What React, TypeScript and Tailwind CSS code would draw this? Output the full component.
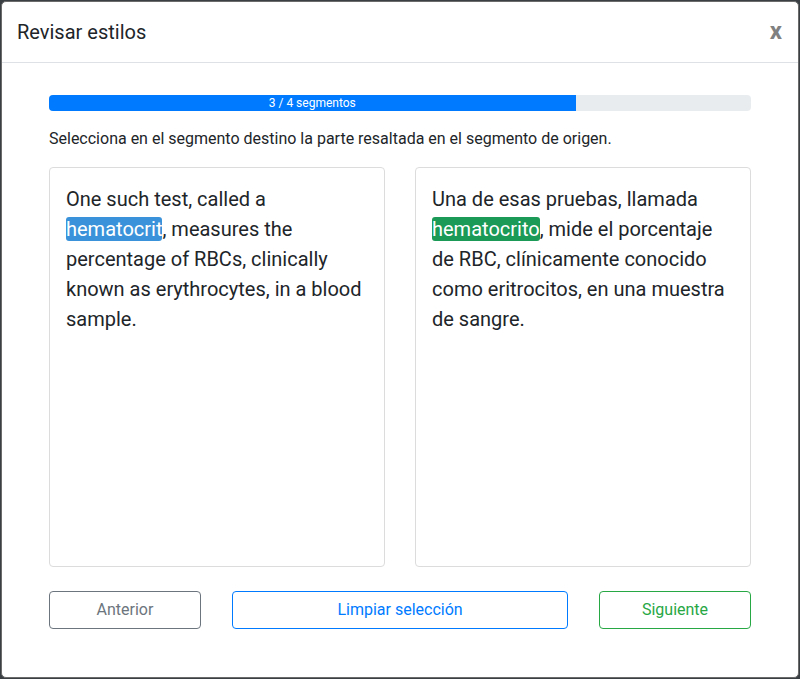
import React from 'react';

const font = { fontFamily: 'Roboto, "Liberation Sans", sans-serif' };

export default function App() {
  return (
    <div className="w-[800px] h-[679px] bg-[#3a3f44] pt-px pl-px overflow-hidden" style={font}>
      <div className="w-[798px] h-[677px] bg-white border border-[#6b6b6b] rounded-[5px] flex flex-col">
        <div className="flex items-center justify-between h-[63px] pl-[15px] pr-4 border-b border-[#dee2e6]">
          <h5 className="text-[20px] leading-[30px] text-[#212529]">Revisar estilos</h5>
          <button className="text-[24px] font-bold text-[#808080] leading-none -mt-[2px]">x</button>
        </div>

        <div className="px-[47px] pt-8 pb-12 flex flex-col">
          <div className="h-4 w-full bg-[#e9ecef] rounded-[4px] overflow-hidden flex">
            <div className="w-3/4 h-full bg-[#007bff] text-white text-[12px] leading-4 text-center">
              3 / 4 segmentos
            </div>
          </div>

          <p className="mt-4 mb-4 text-[16px] leading-6 text-[#212529]">
            Selecciona en el segmento destino la parte resaltada en el segmento de origen.
          </p>

          <div className="grid grid-cols-2 gap-[30px]">
            <div className="h-[400px] border border-[#dcdcdc] rounded-[4px] px-4 pt-4 text-[20px] leading-[30px] text-[#212529]">
              One such test, called a{' '}
              <span className="bg-[#3a93da] text-white rounded-[3px]">hematocrit</span>, measures the
              percentage of RBCs, clinically known as erythrocytes, in a blood sample.
            </div>
            <div className="h-[400px] border border-[#dcdcdc] rounded-[4px] px-4 pt-4 text-[20px] leading-[30px] text-[#212529]">
              Una de esas pruebas, llamada{' '}
              <span className="bg-[#1a9a56] text-white rounded-[3px]">hematocrito</span>, mide el
              porcentaje de RBC, clínicamente conocido como eritrocitos, en una muestra de sangre.
            </div>
          </div>

          <div className="mt-6 flex gap-[31px]">
            <button className="w-[152px] h-[38px] border border-[#6c757d] rounded-[4px] text-[#6c757d] text-[16px]">
              Anterior
            </button>
            <button className="flex-1 h-[38px] border border-[#007bff] rounded-[4px] text-[#007bff] text-[16px]">
              Limpiar selección
            </button>
            <button className="w-[152px] h-[38px] border border-[#28a745] rounded-[4px] text-[#28a745] text-[16px]">
              Siguiente
            </button>
          </div>
        </div>
      </div>
    </div>
  );
}
